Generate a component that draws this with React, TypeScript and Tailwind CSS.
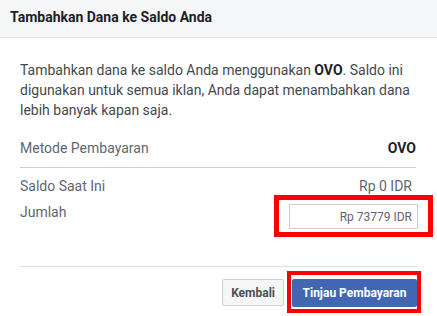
const App = () => {
  return (
    <div className="w-[437px] h-[316px] bg-white overflow-hidden font-['Roboto',sans-serif]">
      {/* Header */}
      <div className="h-[38px] bg-[#f5f6f7] border-b border-[#e5e5e5] px-[10px] flex items-center">
        <div className="text-[14px] font-bold text-[#1d2129] leading-none pb-[4px]">
          Tambahkan Dana ke Saldo Anda
        </div>
      </div>

      <div className="px-5 pt-[22px]">
        <p className="text-[14px] leading-[20px] text-[#444950]">
          Tambahkan dana ke saldo Anda menggunakan{" "}
          <span className="font-bold text-[#1d2129]">OVO</span>. Saldo ini
          digunakan untuk semua iklan, Anda dapat menambahkan dana lebih banyak
          kapan saja.
        </p>

        {/* Metode */}
        <div className="mt-[18px] w-[396px] flex justify-between text-[14px] leading-[20px] pb-[9px] border-b border-[#ccd0d5]">
          <span className="text-[#606770]">Metode Pembayaran</span>
          <span className="font-bold text-[#1d2129]">OVO</span>
        </div>

        <div className="mt-[8px] w-[396px] flex justify-between text-[14px] leading-[20px] text-[#606770]">
          <span>Saldo Saat Ini</span>
          <span className="pr-[4px]">Rp 0 IDR</span>
        </div>

        <div className="mt-[6px] w-[398px] flex justify-between items-start text-[14px] leading-[20px] text-[#606770]">
          <span>Jumlah</span>
          <div className="relative mt-[2px]">
            <div className="w-[129px] h-[25px] border border-[#ccd0d5] bg-white flex items-center justify-end pr-[5px] text-[12px] text-[#606770]">
              Rp 73779 IDR
            </div>
            <div className="absolute -left-[15px] -right-[15px] -top-[9px] -bottom-[8px] border-[5px] border-[#ff0000] pointer-events-none" />
          </div>
        </div>

        {/* Footer */}
        <div className="mt-[37px] w-[397px] border-t border-[#dddfe2] flex justify-end gap-[8px] pt-[12px]">
          <button className="h-[27px] px-[8px] bg-[#f5f6f7] border border-[#ccd0d5] rounded-[2px] text-[12px] font-bold text-[#4b4f56]">
            Kembali
          </button>
          <div className="relative">
            <button className="h-[28px] w-[125px] bg-[#4267b2] rounded-[2px] text-[12px] font-bold text-white">
              Tinjau Pembayaran
            </button>
            <div className="absolute -left-[5px] -right-[4px] -top-[8px] -bottom-[6px] border-[4px] border-[#ff0000] pointer-events-none" />
          </div>
        </div>
      </div>
    </div>
  );
};

export default App;
